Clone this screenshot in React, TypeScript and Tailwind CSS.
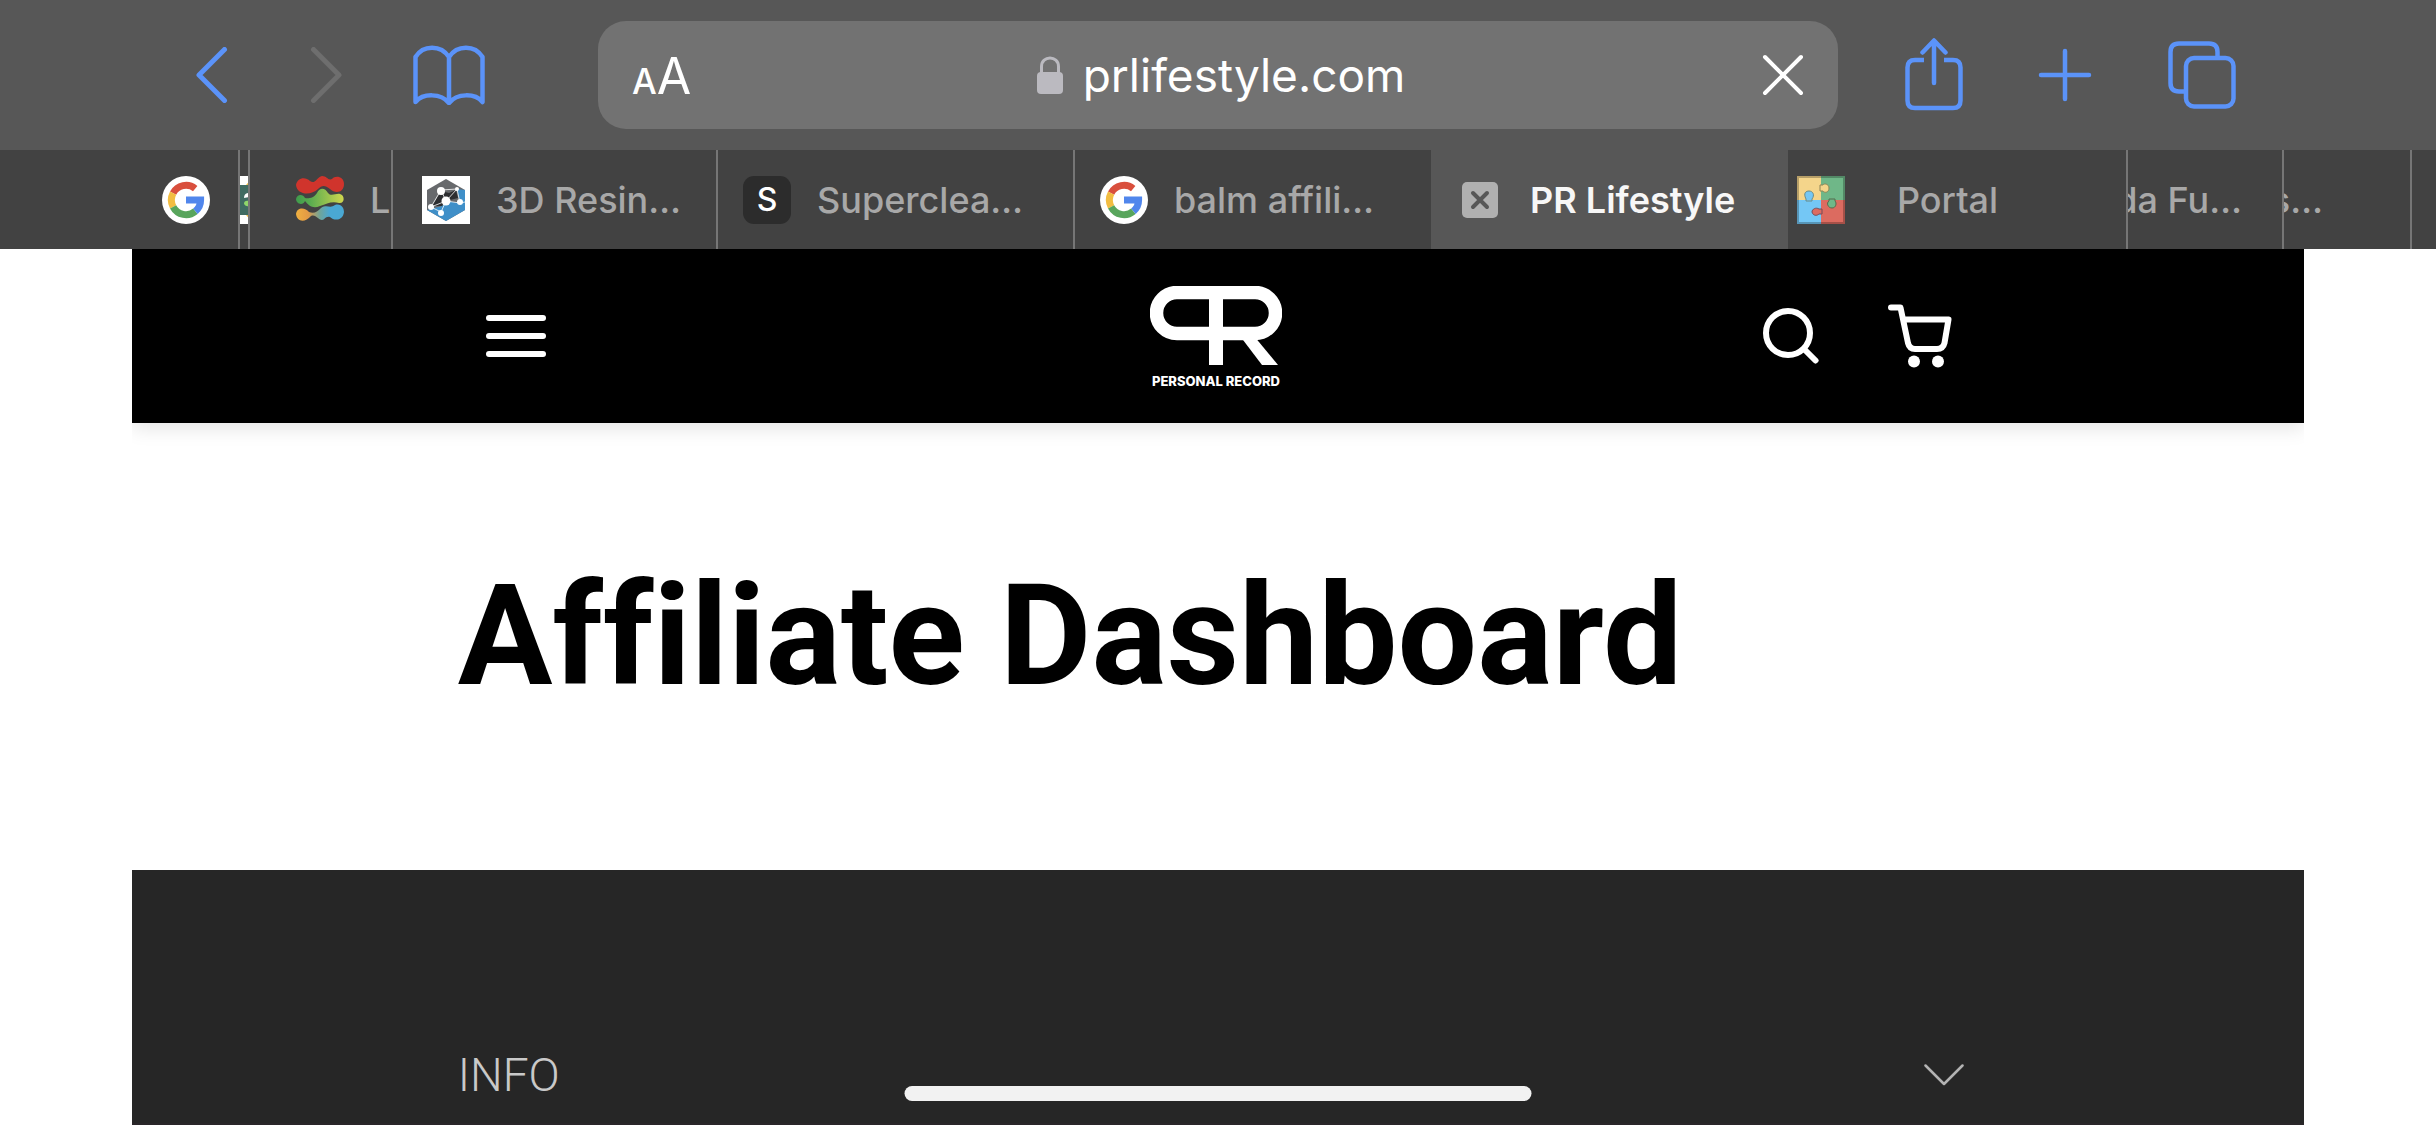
import type { ReactNode } from "react";

function GoogleIcon() {
  return (
    <svg viewBox="0 0 48 48" className="size-12 shrink-0" aria-hidden="true">
      <circle cx="24" cy="24" r="24" fill="#fff" />
      <g fill="none" strokeWidth="7">
        <path d="M33.2 12.6A14.6 14.6 0 0 0 11.1 17.2" stroke="#d94f3d" />
        <path d="M11.1 17.2A14.6 14.6 0 0 0 11.1 30.8" stroke="#f2bd42" />
        <path d="M11.1 30.8A14.6 14.6 0 0 0 33.4 35.2" stroke="#58a55c" />
        <path d="M33.4 35.2A14.6 14.6 0 0 0 38.6 24H24" stroke="#5086ec" />
      </g>
    </svg>
  );
}

function CardIcon() {
  return (
    <svg viewBox="0 0 9 48" className="h-12 w-[9px] shrink-0" aria-hidden="true">
      <rect width="9" height="48" fill="#fff" />
      <path d="M9 5.500L6 9H9ZM9 42.500L6 39H9Z" fill="#f2bd42" />
      <rect y="9" width="9" height="30" fill="#3f6b62" />
      <path d="M9 17Q4 17 4 22L9 21Z" fill="#fff" />
      <path d="M9 25Q4 24 4 28Q6 31 9 30Z" fill="#8fd66a" />
    </svg>
  );
}

function WavesIcon() {
  return (
    <svg viewBox="0 0 48 48" className="size-12 shrink-0" aria-hidden="true">
      <defs>
        <linearGradient id="wave-green">
          <stop offset="0" stopColor="#3f9a4c" />
          <stop offset="0.3" stopColor="#5aac50" />
          <stop offset="1" stopColor="#cfd64e" />
        </linearGradient>
        <linearGradient id="wave-blue">
          <stop offset="0" stopColor="#f0b040" />
          <stop offset="0.25" stopColor="#e39a45" />
          <stop offset="0.5" stopColor="#6fa59a" />
          <stop offset="0.7" stopColor="#4aa8d3" />
        </linearGradient>
      </defs>
      <path d="M0 9C1 2 9 0 14 5C19 9 21 1 26 0C31 0 32 5 36 3C39 -1 48 0 48 8C48 17 39 18 34 13C29 9 26 9 22 13C15 20 1 19 0 9Z" fill="#d0342c" />
      <path d="M0 23C1 18 7 18 9 22C12 23 18 22 21 17C24 11 29 12 32 17C35 21 40 17 44 18C49 19 49 28 43 27C35 25 31 28 24 30C17 33 13 30 9 25C7 30 0 28 0 23Z" fill="url(#wave-green)" />
      <path d="M0 38C1 31 9 31 13 36C18 38 21 36 25 32C31 28 34 33 39 29C45 27 48 32 48 36C47 45 38 45 34 41C29 40 29 44 26 44C22 44 20 38 15 40C9 47 1 46 0 38Z" fill="url(#wave-blue)" />
    </svg>
  );
}

function HexIcon() {
  return (
    <svg viewBox="0 0 48 48" className="size-12 shrink-0" aria-hidden="true">
      <rect width="48" height="48" fill="#fff" />
      <path d="M24 3L43 14V34L24 45L5 34V14Z" fill="#67696c" />
      <path d="M43 14V34L24 45L5 34L20 30L24 25L38 27L35 13Z" fill="#3f8fc8" />
      <path d="M19 15L10 30L20 30L24 25L36 22L34 14L27 17Z" fill="#2d2e31" />
      <path d="M19 14L24 25L38 27L35 13L19 14L9 31L24 25L35 13M9 31L19 36L24 25M43 26L38 27" stroke="#fff" strokeOpacity="0.8" strokeWidth="1" fill="none" />
      <g fill="#fff">
        <circle cx="19" cy="15" r="4" />
        <circle cx="24" cy="25" r="4.500" />
        <circle cx="9" cy="31" r="3" />
        <circle cx="19" cy="37" r="3" />
        <circle cx="38" cy="26" r="3" />
        <circle cx="35" cy="13" r="2" />
      </g>
    </svg>
  );
}

function PuzzleIcon() {
  return (
    <svg viewBox="0 0 48 48" className="size-12 shrink-0" aria-hidden="true">
      <rect width="24" height="24" fill="#f4d58b" />
      <rect x="24" width="24" height="24" fill="#6fb788" />
      <rect y="24" width="24" height="24" fill="#74c7f5" />
      <rect x="24" y="24" width="24" height="24" fill="#dc6b60" />
      <path d="M23 9H26C27 7 32 8 32 12C32 17 27 17 26 15H23Z" fill="#f4d58b" stroke="#8f8556" strokeWidth="1" />
      <path d="M32 23V25C29 27 31 32 35 32C39 32 40 27 38 25V23Z" fill="#6fb788" stroke="#556a4c" strokeWidth="1" />
      <path d="M9 25V23C6 17 9 15 12 15C16 15 18 19 15 23V25Z" fill="#74c7f5" stroke="#6a8b86" strokeWidth="1" />
      <path d="M25 33H22C19 31 15 33 15 36C16 40 20 40 22 38H25Z" fill="#dc6b60" stroke="#774c58" strokeWidth="1" />
      <rect x="1" y="1" width="46" height="46" fill="none" stroke="#000" strokeOpacity="0.25" strokeWidth="2" />
    </svg>
  );
}

function LetterIcon() {
  return (
    <span className="flex size-12 shrink-0 items-center justify-center rounded-[11px] bg-[#2c2c2c] text-[32px] font-medium text-white">
      S
    </span>
  );
}

function Tab({ className, children }: { className: string; children?: ReactNode }) {
  return (
    <button
      type="button"
      role="tab"
      aria-selected="false"
      className={`flex shrink-0 items-center overflow-hidden border-r-2 border-[#767676] whitespace-nowrap ${className}`}
    >
      {children}
    </button>
  );
}

function Toolbar() {
  return (
    <div className="flex h-[150px] items-center pr-[200px] pl-[196px] text-[#5b93f9]">
      <button type="button" aria-label="Back">
        <svg viewBox="0 0 32 56" className="h-14 w-8" fill="none" stroke="currentColor" strokeWidth="5" strokeLinecap="round" strokeLinejoin="round">
          <path d="M28.500 2.500L3 28L28.500 53.500" />
        </svg>
      </button>
      <button type="button" aria-label="Forward" className="ml-[82px] text-[#6e6e6e]" disabled>
        <svg viewBox="0 0 32 56" className="h-14 w-8" fill="none" stroke="currentColor" strokeWidth="5" strokeLinecap="round" strokeLinejoin="round">
          <path d="M3.500 2.500L29 28L3.500 53.500" />
        </svg>
      </button>
      <button type="button" aria-label="Bookmarks" className="ml-[71px]">
        <svg viewBox="0 0 72 60" className="h-[60px] w-[72px]" fill="none" stroke="currentColor" strokeWidth="4.500" strokeLinecap="round" strokeLinejoin="round">
          <path d="M36 12C28 -0.500 10 -0.500 2.500 12V57C10 48 28 48 36 58C44 48 62 48 69.500 57V12C62 -0.500 44 -0.500 36 12ZM36 12V58" />
        </svg>
      </button>
      <div className="ml-[113px] flex h-[108px] flex-1 items-center rounded-[28px] bg-[#727272] px-[34px] text-white">
        <button type="button" aria-label="Page settings" className="flex w-20 items-baseline pt-[2px] leading-none font-medium">
          <span className="text-[35px]">A</span>
          <span className="text-[50px] font-normal">A</span>
        </button>
        <div className="flex flex-1 items-center justify-center gap-5">
          <svg viewBox="0 0 26 38" className="h-[38px] w-[26px]" aria-hidden="true">
            <path d="M4.500 18V10.500C4.500 -1 21.500 -1 21.500 10.500V18" fill="none" stroke="#bbbac0" strokeWidth="3" />
            <rect y="16" width="26" height="22" rx="4" fill="#bbbac0" />
          </svg>
          <span className="text-[46px] leading-[60px]">prlifestyle.com</span>
        </div>
        <button type="button" aria-label="Stop loading" className="flex w-[74px] justify-end">
          <svg viewBox="0 0 42 42" className="size-[42px]" stroke="currentColor" strokeWidth="4" strokeLinecap="round">
            <path d="M3 3L39 39M39 3L3 39" />
          </svg>
        </button>
      </div>
      <button type="button" aria-label="Share" className="ml-[67px]">
        <svg viewBox="0 0 58 74" className="h-[74px] w-[58px]" fill="none" stroke="currentColor" strokeWidth="4.500" strokeLinecap="round" strokeLinejoin="round">
          <path d="M19 22H10Q2.500 22 2.500 29.500V62.500Q2.500 70 10 70H48Q55.500 70 55.500 62.500V29.500Q55.500 22 48 22H39" strokeLinecap="butt" />
          <path d="M29 45V3M17.500 14.500L29 2.500L40.500 14.500" />
        </svg>
      </button>
      <button type="button" aria-label="New tab" className="ml-[75px]">
        <svg viewBox="0 0 54 54" className="size-[54px]" stroke="currentColor" strokeWidth="4.500" strokeLinecap="round">
          <path d="M27 3V51M3 27H51" />
        </svg>
      </button>
      <button type="button" aria-label="Show tabs" className="ml-[76px]">
        <svg viewBox="0 0 68 68" className="size-[68px]" fill="none" stroke="currentColor" strokeWidth="4.500">
          <path d="M17 50.500H11Q2.500 50.500 2.500 42V11Q2.500 2.500 11 2.500H41Q49.500 2.500 49.500 11V16" />
          <rect x="18" y="17" width="47.500" height="48.500" rx="8" />
        </svg>
      </button>
    </div>
  );
}

function TabBar() {
  return (
    <div role="tablist" aria-label="Open tabs" className="flex h-[99px] overflow-hidden bg-[#424242] text-[36px] font-medium text-[#a8a8a8]">
      <Tab className="w-60 pl-[162px]"><GoogleIcon /></Tab>
      <Tab className="w-[10px]"><CardIcon /></Tab>
      <Tab className="w-[143px] gap-[26px] pl-[46px]"><WavesIcon />Lo</Tab>
      <Tab className="w-[325px] gap-[26px] pl-[29px]"><HexIcon />3D Resin…</Tab>
      <Tab className="w-[357px] gap-[26px] pl-[25px]"><LetterIcon />Superclea…</Tab>
      <button type="button" role="tab" aria-selected="false" className="flex w-[356px] shrink-0 items-center gap-[26px] overflow-hidden pl-[25px] whitespace-nowrap">
        <GoogleIcon />balm affili…
      </button>
      <div className="flex w-[357px] shrink-0 items-center gap-8 bg-[#575757] pl-[31px] whitespace-nowrap text-[#f7f7f7]">
        <button type="button" aria-label="Close tab">
          <svg viewBox="0 0 36 36" className="size-9">
            <rect width="36" height="36" rx="5" fill="#b0b0b0" />
            <path d="M11 11L25 25M25 11L11 25" stroke="#575757" strokeWidth="4" strokeLinecap="round" />
          </svg>
        </button>
        <button type="button" role="tab" aria-selected="true" className="font-semibold">PR Lifestyle</button>
      </div>
      <Tab className="w-[340px] gap-[52px] pl-[9px]"><PuzzleIcon />Portal</Tab>
      <Tab className="w-[156px] justify-end pr-10">da Fu…</Tab>
      <Tab className="w-32 justify-end pr-[87px]">s…</Tab>
    </div>
  );
}

function SiteHeader() {
  return (
    <header className="grid h-[174px] grid-cols-3 items-center bg-black px-[15%] text-white shadow-[0_6px_18px_rgba(0,0,0,0.1)]">
      <button type="button" aria-label="Menu" className="ml-7 flex w-[60px] flex-col gap-3">
        <span className="h-[6px] rounded-full bg-white" />
        <span className="h-[6px] rounded-full bg-white" />
        <span className="h-[6px] rounded-full bg-white" />
      </button>
      <a href="#home" aria-label="Personal Record" className="flex flex-col items-center pt-[2px] pr-1">
        <svg viewBox="0 0 132 79" className="h-[79px] w-[132px]" aria-hidden="true">
          <path d="M27 6.500H105A20.500 20.500 0 0 1 105 47.500H27A20.500 20.500 0 0 1 27 6.500Z" fill="none" stroke="#fff" strokeWidth="13.500" />
          <rect x="59" y="4" width="14" height="75" fill="#fff" />
          <path d="M90 50H104L128 79H112Z" fill="#fff" />
        </svg>
        <span className="mt-2 font-['Inter',sans-serif] text-[13px] leading-4 font-extrabold">PERSONAL RECORD</span>
      </a>
      <div className="mr-[26px] flex items-center justify-end gap-[69px]">
        <button type="button" aria-label="Search">
          <svg viewBox="0 0 56 56" className="size-14" fill="none" stroke="currentColor" strokeWidth="6" strokeLinecap="round">
            <circle cx="25" cy="25" r="22" />
            <path d="M41 41L52.500 52.500" />
          </svg>
        </button>
        <button type="button" aria-label="Cart">
          <svg viewBox="0 0 64 64" className="size-16" fill="none" stroke="currentColor" strokeWidth="6" strokeLinecap="round" strokeLinejoin="round">
            <path d="M3 3.500H12.500L20 39Q21.500 45 27 45H49Q55 45 56.500 39L60.500 15.500H16" />
            <circle cx="26" cy="57.500" r="6" fill="currentColor" stroke="none" />
            <circle cx="50" cy="57.500" r="6" fill="currentColor" stroke="none" />
          </svg>
        </button>
      </div>
    </header>
  );
}

export default function App() {
  return (
    <div className="relative flex h-screen flex-col overflow-hidden bg-white font-['Inter',sans-serif]">
      <div className="bg-[#575757]">
        <Toolbar />
        <TabBar />
      </div>
      <div className="mx-[132px] flex flex-1 flex-col font-['Roboto',sans-serif]">
        <div className="overflow-hidden pb-6">
          <SiteHeader />
        </div>
        <main className="flex-1 px-[15%] pt-[109px]">
          <h1 className="text-[141px] leading-[160px] font-bold whitespace-nowrap text-black [font-variant-ligatures:none]">Affiliate Dashboard</h1>
        </main>
        <footer className="h-[255px] border-b-2 border-[#2a2629] bg-[#262626] px-[15%] pt-[175px]">
          <button type="button" aria-expanded="false" className="flex w-full items-center justify-between pr-[14px] text-[#c9c9c9]">
            <span className="text-[46px] leading-[60px] font-light">INFO</span>
            <svg viewBox="0 0 40 22" className="h-[22px] w-10" fill="none" stroke="#b3b3b3" strokeWidth="2.500" strokeLinecap="round" strokeLinejoin="round" aria-hidden="true">
              <path d="M1.500 1.500L20 20L38.500 1.500" />
            </svg>
          </button>
        </footer>
      </div>
      <div className="absolute bottom-6 left-1/2 h-[15px] w-[627px] -translate-x-1/2 rounded-full bg-[#f2f2f2]" />
    </div>
  );
}
